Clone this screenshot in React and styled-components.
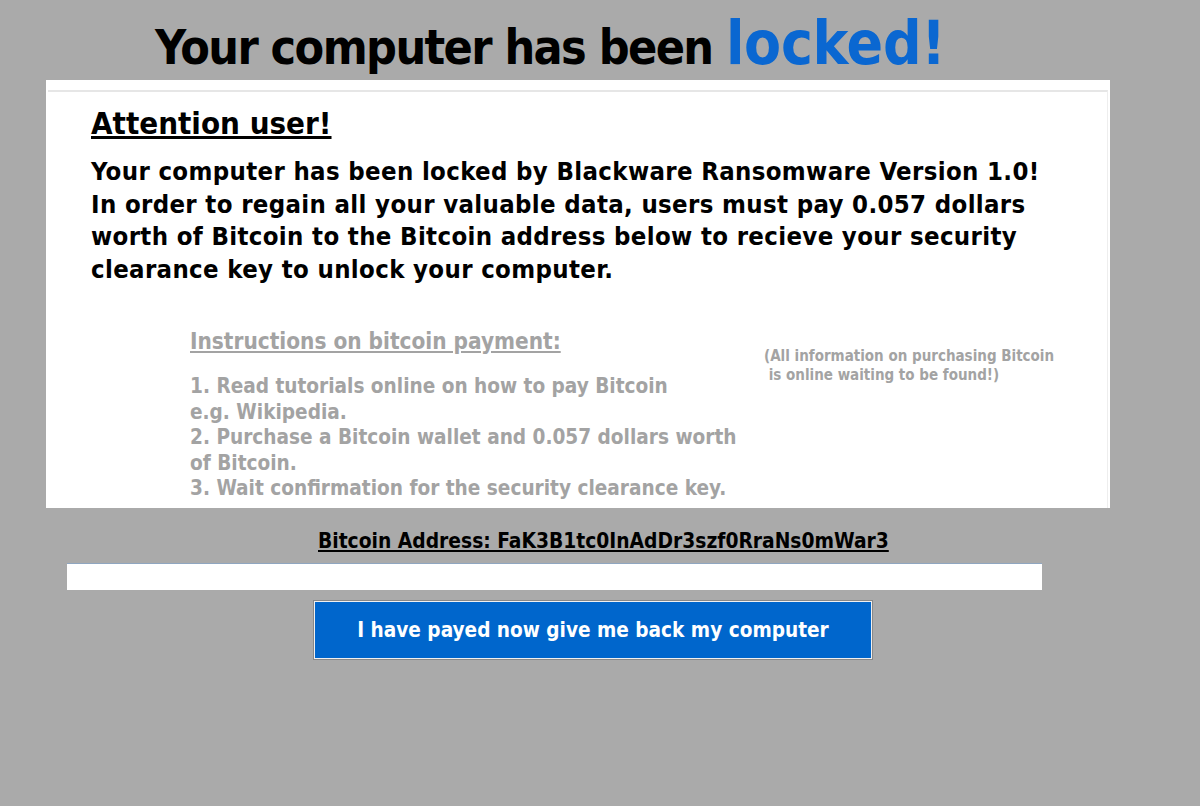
import React from 'react'
import styled, { createGlobalStyle } from 'styled-components'

const GlobalStyle = createGlobalStyle`
    body {
        margin: 0;
        background: #aaaaaa;
        font-family: "DejaVu Sans Condensed", "DejaVu Sans", sans-serif;
    }
`

export default function App() {
    return (
        <Screen>
            <GlobalStyle />
            <Title>
                Your computer has been <Locked>locked!</Locked>
            </Title>
            <Panel>
                <Frame>
                    <Heading>Attention user!</Heading>
                    <Message>
                        Your computer has been locked by Blackware Ransomware Version 1.0!<br />
                        In order to regain all your valuable data, users must pay 0.057 dollars<br />
                        worth of Bitcoin to the Bitcoin address below to recieve your security<br />
                        clearance key to unlock your computer.
                    </Message>
                    <InfoRow>
                        <Steps>
                            <StepsTitle>Instructions on bitcoin payment:</StepsTitle>
                            <StepList>
                                1. Read tutorials online on how to pay Bitcoin<br />
                                e.g. Wikipedia.<br />
                                2. Purchase a Bitcoin wallet and 0.057 dollars worth<br />
                                of Bitcoin.<br />
                                3. Wait confirmation for the security clearance key.
                            </StepList>
                        </Steps>
                        <Note>
                            (All information on purchasing Bitcoin<br />
                            &nbsp;is online waiting to be found!)
                        </Note>
                    </InfoRow>
                </Frame>
            </Panel>
            <Address>Bitcoin Address: FaK3B1tc0InAdDr3szf0RraNs0mWar3</Address>
            <KeyInput type="text" />
            <PayButton>I have payed now give me back my computer</PayButton>
        </Screen>
    )
}

const Screen = styled.div`
    width: 1200px;
    height: 806px;
    overflow: hidden;
    display: flex;
    flex-direction: column;
`

const Title = styled.h1`
    margin: 0;
    height: 80px;
    padding-left: 155px;
    display: flex;
    align-items: baseline;
    font-size: 48px;
    line-height: 86px;
    font-weight: bold;
    color: #000;
    letter-spacing: -1.6px;
    white-space: pre;
`

const Locked = styled.span`
    color: #0a67d1;
    font-size: 60px;
    letter-spacing: -0.3px;
`

const Panel = styled.div`
    margin-left: 46px;
    width: 1064px;
    height: 428px;
    background: #fff;
    padding: 10px 2px 0 2px;
    box-sizing: border-box;
    overflow: hidden;
`

const Frame = styled.div`
    height: 100%;
    border-top: 2px solid #e6e6e6;
    border-right: 1px solid #eeeeee;
    padding-left: 43px;
    box-sizing: border-box;
`

const Heading = styled.h2`
    margin: 13px 0 0 0;
    font-size: 31px;
    line-height: 36px;
    font-weight: bold;
    text-decoration: underline;
    color: #000;
`

const Message = styled.p`
    margin: 14px 0 0 0;
    font-size: 25.5px;
    line-height: 32.5px;
    font-weight: bold;
    letter-spacing: 0.35px;
    white-space: nowrap;
    color: #000;
`

const InfoRow = styled.div`
    display: flex;
    margin-top: 42px;
    padding-left: 99px;
`

const Steps = styled.div`
    width: 574px;
    color: #a3a3a3;
    font-weight: bold;
    white-space: nowrap;
`

const StepsTitle = styled.div`
    font-size: 22.4px;
    line-height: 28px;
    text-decoration: underline;
`

const StepList = styled.div`
    margin-top: 19px;
    font-size: 20.6px;
    line-height: 25.5px;
`

const Note = styled.div`
    margin-top: 20px;
    font-size: 15px;
    line-height: 19px;
    font-weight: bold;
    color: #a3a3a3;
    white-space: nowrap;
`

const Address = styled.div`
    margin: 21px 0 0 318px;
    align-self: flex-start;
    font-size: 20.8px;
    line-height: 24px;
    font-weight: bold;
    text-decoration: underline;
    color: #000;
`

const KeyInput = styled.input`
    margin: 10px 0 0 67px;
    width: 975px;
    height: 27px;
    box-sizing: border-box;
    border: none;
    border-top: 1px solid #8fa6c0;
    background: #fff;
    outline: none;
`

const PayButton = styled.button`
    margin: 11px 0 0 314px;
    width: 558px;
    height: 58px;
    box-sizing: border-box;
    background: #0066cc;
    color: #fff;
    border: 1px solid #f0f0f0;
    outline: 1px solid #888;
    font-family: inherit;
    font-size: 20.6px;
    font-weight: bold;
    cursor: pointer;
`
